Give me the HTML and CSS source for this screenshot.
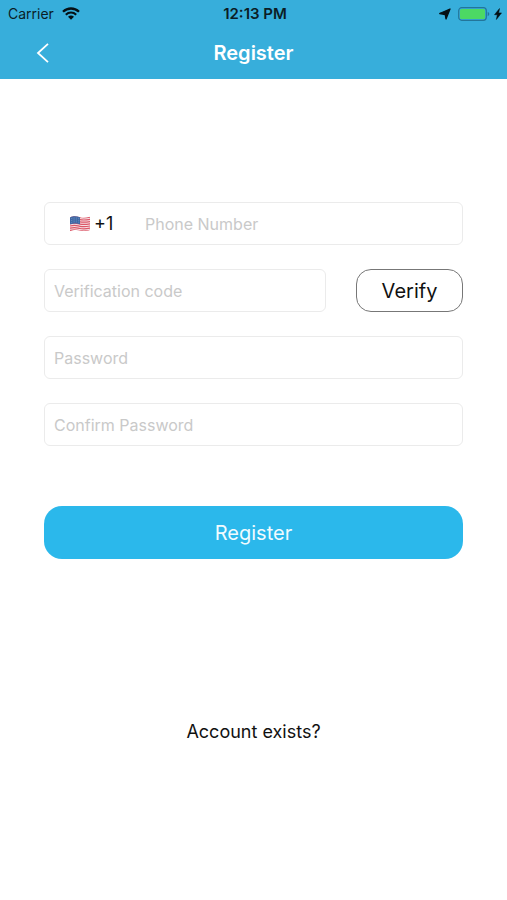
FILE: index.html
```
<!DOCTYPE html>
<html lang="en">
<head>
<meta charset="utf-8">
<meta name="viewport" content="width=device-width, initial-scale=1">
<title>Register</title>
<link rel="stylesheet" href="styles.css">
</head>
<body>
<header class="header">
  <div class="status">
    <div class="status-side">
      <span class="carrier">Carrier</span>
      <svg class="wifi" viewBox="0 0 18 13" aria-hidden="true">
        <path d="M1 4.8C5.5.4 12.500.4 17 4.800" fill="none" stroke="currentColor" stroke-width="2.300"/>
        <path d="M3.800 7.700C6.800 4.800 11.200 4.800 14.200 7.700" fill="none" stroke="currentColor" stroke-width="2.100"/>
        <path d="M6 9.800Q9 7.200 12 9.800L9 12.800Z" fill="currentColor"/>
      </svg>
    </div>
    <time class="clock">12:13 PM</time>
    <div class="status-side status-right">
      <svg class="location" viewBox="0 0 12 12" aria-hidden="true"><path d="M11 1 7 11 6.200 6.500.7 5.500Z" fill="currentColor" stroke="currentColor" stroke-width="1.300" stroke-linejoin="round"/></svg>
      <svg class="battery" viewBox="0 0 32 14" aria-hidden="true">
        <rect x=".7" y=".7" width="27.600" height="12.600" rx="3" fill="none" stroke="#23759a" stroke-width="1.200"/>
        <rect x="2" y="2" width="25" height="10" rx="1.500" fill="#4cd964"/>
        <path d="M29.700 4.800Q31.300 5.500 31.300 7T29.700 9.200Z" fill="#23759a"/>
      </svg>
      <svg class="bolt" viewBox="0 0 8 12" aria-hidden="true"><path d="M5.500.5.500 6.700H3.300L2.400 11.500 7.500 4.900H4.700Z" fill="currentColor" stroke="currentColor" stroke-width=".5" stroke-linejoin="round"/></svg>
    </div>
  </div>
  <nav class="nav">
    <button class="back" type="button" aria-label="Back">
      <svg class="chevron" viewBox="0 0 14 20" aria-hidden="true"><path d="M12 .8 2 10 12 19.200" fill="none" stroke="currentColor" stroke-width="1.800"/></svg>
    </button>
    <h1 class="title">Register</h1>
  </nav>
</header>
<main class="content">
  <form class="form">
    <div class="field phone">
      <button class="country" type="button" aria-label="Country code +1">
        <svg class="flag" viewBox="0 0 22 16" aria-hidden="true">
          <defs><clipPath id="wave"><path d="M1 1.500C5-.5 8 .5 11 1.300S17 2 21 .8V14C17 15.500 14 15.200 11 14.500S5 13.700 1 15.200Z"/></clipPath></defs>
          <g clip-path="url(#wave)">
            <rect width="22" height="16" fill="#f6dfe3"/>
            <g fill="none" stroke="#dc5868" stroke-width="1.200">
              <path d="M0 1.500C6-.5 8 1 11 1.500S17 2 22 1"/>
              <path d="M0 3.700C6 1.700 8 3.200 11 3.700S17 4.200 22 3.200"/>
              <path d="M0 5.900C6 3.900 8 5.400 11 5.900S17 6.400 22 5.400"/>
              <path d="M0 8.100C6 6.100 8 7.600 11 8.100S17 8.600 22 7.600"/>
              <path d="M0 10.300C6 8.300 8 9.800 11 10.300S17 10.800 22 9.800"/>
              <path d="M0 12.500C6 10.500 8 12 11 12.500S17 13 22 12"/>
              <path d="M0 14.700C6 12.700 8 14.200 11 14.700S17 15.200 22 14.200"/>
            </g>
            <path d="M0 0H11V8.200C8 7.400 5 7 0 8.600Z" fill="#3e68a5"/>
            <g fill="none" stroke="#a9bedb" stroke-width=".6" stroke-dasharray=".6 1.200">
              <path d="M2 2.800C5 1.500 8 2 11 2.700M2 4.700C5 3.400 8 3.900 11 4.600M2 6.600C5 5.300 8 5.800 11 6.500"/>
            </g>
          </g>
        </svg>
        <span>+1</span>
      </button>
      <input class="phone-input" type="tel" placeholder="Phone Number" aria-label="Phone Number">
    </div>
    <div class="verify-row">
      <input class="field" type="text" placeholder="Verification code" aria-label="Verification code">
      <button class="verify" type="button">Verify</button>
    </div>
    <input class="field" type="password" placeholder="Password" aria-label="Password">
    <input class="field" type="password" placeholder="Confirm Password" aria-label="Confirm Password">
    <button class="submit" type="submit">Register</button>
  </form>
  <a class="account" href="#">Account exists?</a>
</main>
</body>
</html>
```
FILE: styles.css
```
* {
  box-sizing: border-box;
}

body {
  margin: 0;
  background: #fff;
  color: #111;
  font-family: Inter, "Liberation Sans", sans-serif;
  font-size: 16px;
}

button,
input {
  margin: 0;
  padding: 0;
  border: 0;
  background: none;
  color: inherit;
  font: inherit;
}

svg {
  display: block;
  flex: none;
}

.header {
  background: #37aedb;
}

.status {
  display: grid;
  grid-template-columns: 1fr auto 1fr;
  align-items: center;
  height: 27px;
  padding: 0 5px 0 8px;
  color: #0b1d26;
  font-size: 14px;
}

.status-side {
  display: flex;
  align-items: center;
  gap: 8px;
}

.status-right {
  justify-content: flex-end;
  gap: 4px;
  color: #051015;
}

.clock {
  font-size: 15px;
  font-weight: 600;
}

.wifi {
  width: 18px;
  height: 13px;
  color: #051015;
}

.location {
  width: 12px;
  height: 12px;
  margin-right: 3px;
}

.battery {
  width: 32px;
  height: 14px;
}

.bolt {
  width: 8px;
  height: 12px;
}

.nav {
  display: grid;
  grid-template-columns: 1fr auto 1fr;
  align-items: center;
  height: 52px;
  padding: 0 36px;
  color: #fff;
}

.back {
  justify-self: start;
}

.chevron {
  width: 14px;
  height: 20px;
}

.title {
  margin: 0;
  font-size: 20px;
  font-weight: 600;
}

.content {
  display: flex;
  flex-direction: column;
  padding: 123px 44px 40px;
}

.form {
  display: flex;
  flex-direction: column;
  gap: 24px;
}

.field {
  width: 100%;
  min-width: 0;
  height: 43px;
  padding: 0 9px;
  border: 1px solid #ebebeb;
  border-radius: 6px;
}

::placeholder {
  color: #c9c9c9;
  opacity: 1;
}

.phone {
  display: flex;
  align-items: center;
  padding-left: 24px;
}

.country {
  display: flex;
  align-items: center;
  gap: 3px;
  width: 76px;
  font-size: 18px;
}

.flag {
  width: 22px;
  height: 16px;
}

.phone-input {
  flex: 1;
  min-width: 0;
}

.verify-row {
  display: flex;
  gap: 30px;
}

.verify {
  flex: none;
  width: 107px;
  height: 43px;
  border: 1px solid #777;
  border-radius: 15px;
  font-size: 20px;
}

.submit {
  height: 53px;
  margin-top: 36px;
  border-radius: 18px;
  background: #2bb8eb;
  color: #f0fbff;
  font-size: 20px;
}

.account {
  align-self: center;
  margin-top: 161px;
  color: #111;
  font-size: 18px;
  line-height: 24px;
  text-decoration: none;
}
```
